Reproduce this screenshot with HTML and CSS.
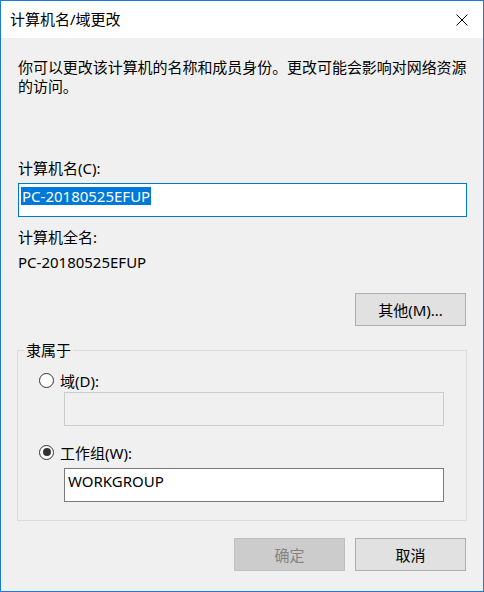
FILE: index.html
```html
<!DOCTYPE html>
<html lang="zh-CN">
<head>
    <meta charset="UTF-8">
    <meta name="viewport" content="width=device-width, initial-scale=1.0">
    <title>计算机名/域更改</title>
    <link rel="stylesheet" href="styles.css">
</head>
<body>
    <div class="window">
        <div class="titlebar">
            <span class="title">计算机名/域更改</span>
            <svg class="close" width="12" height="12" viewBox="0 0 12 12">
                <path d="M0.5 0.5 L11.5 11.5 M11.5 0.5 L0.5 11.5" stroke="#000" stroke-width="1" fill="none"/>
            </svg>
        </div>
        <div class="content">
            <p class="intro">你可以更改该计算机的名称和成员身份。更改可能会影响对网络资源的访问。</p>

            <div class="label name-label">计算机名(C):</div>
            <div class="textbox focused"><span class="selected">PC-20180525EFUP</span></div>

            <div class="label full-label">计算机全名:</div>
            <div class="label full-name">PC-20180525EFUP</div>

            <div class="row-right more-row">
                <div class="btn">其他(M)...</div>
            </div>

            <fieldset class="member">
                <legend>隶属于</legend>
                <div class="radio-row first">
                    <span class="radio"></span>
                    <span>域(D):</span>
                </div>
                <div class="textbox disabled indent"></div>
                <div class="radio-row second">
                    <span class="radio checked"></span>
                    <span>工作组(W):</span>
                </div>
                <div class="textbox indent workgroup">WORKGROUP</div>
            </fieldset>

            <div class="row-right actions">
                <div class="btn btn-disabled">确定</div>
                <div class="btn">取消</div>
            </div>
        </div>
    </div>
</body>
</html>
```

FILE: styles.css
```css
html, body {
    margin: 0;
    padding: 0;
}
body {
    font-family: "Noto Sans", "Noto Sans CJK SC", sans-serif;
    font-size: 15px;
    color: #000;
    background: #f0f0f0;
}
.window {
    width: 484px;
    height: 592px;
    box-sizing: border-box;
    border: 1px solid #1c7cd5;
    display: flex;
    flex-direction: column;
}
.titlebar {
    height: 37px;
    background: #fff;
    display: flex;
    align-items: center;
    justify-content: space-between;
    padding: 0 15px 0 9px;
}
.title {
    line-height: 19px;
}
.close {
    display: block;
}
.content {
    flex: 1;
    background: #f0f0f0;
    padding: 0 17px;
}
.intro {
    margin: 20px -4px 0 0;
    line-height: 19px;
    letter-spacing: -0.05px;
}
.label {
    line-height: 19px;
}
.name-label {
    margin-top: 63px;
}
.textbox {
    height: 34px;
    box-sizing: border-box;
    border: 1px solid #7a7a7a;
    background: #fff;
    padding: 3px 0 0 3px;
    line-height: 18px;
    white-space: nowrap;
}
.textbox.focused {
    margin-top: 5px;
    width: 449px;
    border-color: #0078d7;
    padding-left: 2px;
}
.selected {
    display: inline-block;
    background: #0078d7;
    color: #fff;
    padding: 0 1px;
}
.textbox.disabled {
    background: #f0f0f0;
    border-color: #cccccc;
}
.full-label {
    margin-top: 11px;
}
.full-name {
    margin-top: 6px;
}
.row-right {
    display: flex;
    justify-content: flex-end;
    gap: 10px;
}
.more-row {
    margin-top: 21px;
}
.btn {
    width: 111px;
    height: 33px;
    box-sizing: border-box;
    background: #e1e1e1;
    border: 1px solid #adadad;
    display: flex;
    align-items: center;
    justify-content: center;
}
.btn-disabled {
    background: #cccccc;
    border-color: #bfbfbf;
    color: #838383;
}
.member {
    margin: 15px -1px 0 -1px;
    padding: 0 0 18px 0;
    border: 1px solid #dcdcdc;
}
.member legend {
    margin-left: 6px;
    padding: 0 2px;
    line-height: 19px;
}
.radio-row {
    display: flex;
    align-items: center;
    gap: 6px;
    height: 20px;
    margin-left: 21px;
}
.radio-row.first {
    margin-top: 10px;
}
.radio-row.second {
    margin-top: 16px;
}
.radio {
    width: 15px;
    height: 15px;
    box-sizing: border-box;
    border: 1px solid #333;
    border-radius: 50%;
    background: #fff;
    display: flex;
    align-items: center;
    justify-content: center;
}
.radio.checked::after {
    content: "";
    width: 8px;
    height: 8px;
    border-radius: 50%;
    background: #333;
}
.indent {
    margin-left: 46px;
    width: 380px;
}
.disabled.indent {
    margin-top: 2px;
}
.workgroup {
    margin-top: 6px;
}
.actions {
    margin-top: 17px;
}
```
